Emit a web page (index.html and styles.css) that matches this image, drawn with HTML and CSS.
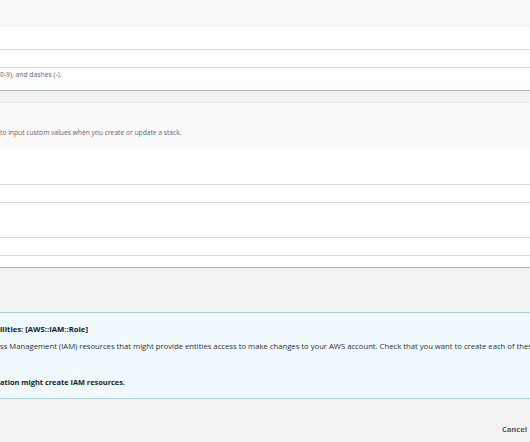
FILE: index.html
```html
<!DOCTYPE html>
<html lang="en">
<head>
    <meta charset="UTF-8">
    <title>Specify stack details</title>
    <link rel="stylesheet" href="styles.css">
</head>
<body>
    <div class="page">
        <!-- stack name -->
        <div class="panel">
            <div class="panel-head"></div>
            <div class="panel-body first">
                <div class="label-row"></div>
                <div class="field"></div>
                <p class="desc"><span class="hid"><span>Stack name can include letters (A-Z and a-z), numbers (</span></span>0-9), and dashes (-).</p>
            </div>
        </div>

        <!-- parameters -->
        <div class="panel params">
            <div class="panel-head tall">
                <p class="desc"><span class="hid"><span>Parameters are defined in your template and allow you </span></span>to input custom values when you create or update a stack.</p>
            </div>
            <div class="panel-body second">
                <div class="field"></div>
                <div class="field-gap"></div>
                <div class="field"></div>
            </div>
        </div>

        <!-- capabilities -->
        <div class="info">
            <p class="info-title"><span class="hid"><span>The following resource(s) require capab</span></span>ilities: [AWS::IAM::Role]</p>
            <p class="info-text"><span class="hid"><span>This template contains Identity and Acce</span></span>ss Management (IAM) resources that might provide entities access to make changes to your AWS account. Check that you want to create each of these resources and that they have the minimum required permissions.</p>
            <p class="ack"><span class="hid"><span>I acknowledge that AWS CloudForm</span></span>ation might create IAM resources.</p>
        </div>

        <div class="footer">
            <a href="javascript:;" class="cancel">Cancel</a>
        </div>
    </div>
</body>
</html>
```
FILE: styles.css
```css
html,body,div,p{margin: 0; padding: 0;}
a{text-decoration: none;}
html,body{width: 530px; height: 442px; overflow: hidden;}
body{background-color: #f2f2f2; font-family: "Open Sans", "Liberation Sans", sans-serif; color: #16191f;}

/* text whose start lies left of the window */
.hid{display: inline-flex; justify-content: flex-end; width: 0;}
.hid span{flex-shrink: 0;}
.desc,.info-title,.info-text,.ack{display: flex; white-space: nowrap;}

.panel{background-color: #fff; border-bottom: 1px solid #aab7b8;}
.panel-head{height: 25px; background-color: #fafafa; border-bottom: 1px solid #f0f0f0;}
.panel-head.tall{height: 47px; box-sizing: border-box; padding-top: 25px; border-top: 1px solid #e9ebeb; border-bottom: 0;}
.panel-body.first .label-row{height: 23px;}
.field{height: 17px; border-top: 1px solid #dadada; border-bottom: 1px solid #dadada; background-color: #fff;}
.panel-body.first .desc{padding: 3px 0 11px; font-size: 6.8px;}
.desc{font-size: 6.3px; line-height: 8px; color: #5f666d;}
.params{margin-top: 11px;}
.params .desc{font-size: 6.7px; line-height: 9px;}
.panel-body.second{padding: 35px 0 11px;}
.field-gap{height: 34px;}

.info{margin-top: 44px; background-color: #f1faff; border-top: 1px solid #a6d4e3; border-bottom: 1px solid #a6d4e3; padding: 11px 0 11px; font-size: 7.7px; line-height: 10px;}
.info-title{font-weight: bold;}
.info-text{margin-top: 7px; color: #2a2e33;}
.ack{margin-top: 26px; font-weight: bold; font-size: 7.4px;}

.footer{display: flex; justify-content: flex-end; padding: 25px 3px 0 0;}
.cancel{font-size: 7.6px; line-height: 10px; font-weight: bold; color: #545b64;}
```
